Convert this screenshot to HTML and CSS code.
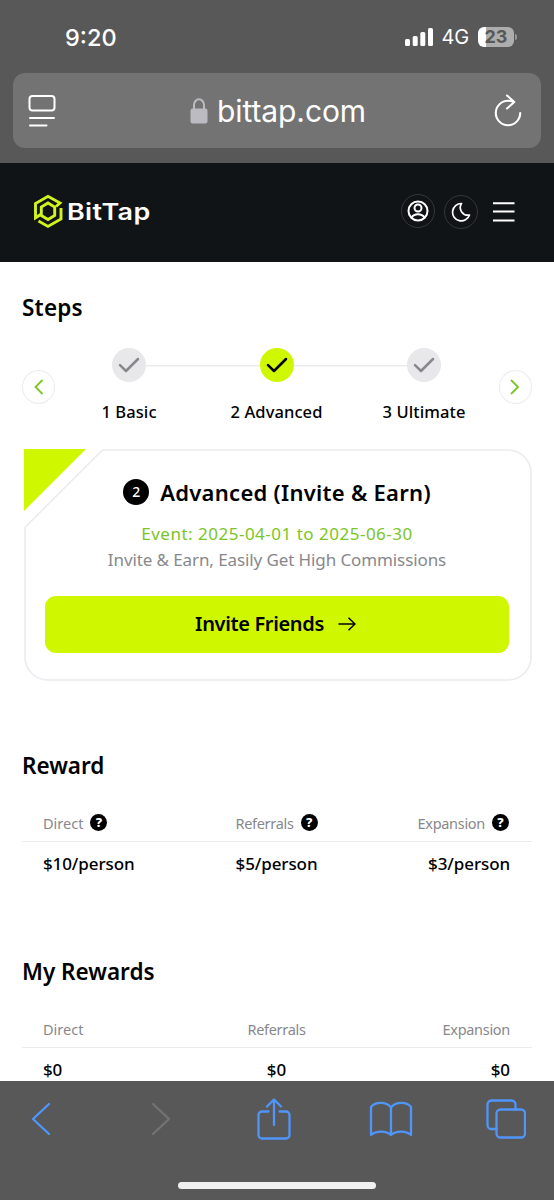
FILE: index.html
```html
<!DOCTYPE html>
<html lang="en">
<head>
<meta charset="utf-8">
<title>BitTap</title>
<link rel="stylesheet" href="styles.css">
</head>
<body>
<div class="phone">
  <div class="chrome-top">
    <div class="status">
      <span class="time">9:20</span>
      <div class="status-right">
        <svg class="signal" width="29" height="18" viewBox="0 0 29 18" fill="#fff"><rect x="0" y="11" width="5" height="7" rx="1.5"/><rect x="7.7" y="8" width="5" height="10" rx="1.5"/><rect x="15.3" y="4" width="5" height="14" rx="1.5"/><rect x="23" y="0" width="5" height="18" rx="1.5"/></svg>
        <span class="network">4G</span>
        <div class="battery"><span>23</span></div>
        <i class="battery-tip"></i>
      </div>
    </div>
    <div class="urlbar">
      <svg class="reader" width="28" height="34" viewBox="0 0 28 34" fill="none" stroke="#fff" stroke-width="2" stroke-linecap="round"><rect x="1.5" y="2" width="25" height="14.5" rx="3"/><path d="M2 24H26M2 31.6H18.5"/></svg>
      <div class="address">
        <svg width="18" height="26" viewBox="0 0 18 26"><path d="M4 12V7a5 5.7 0 0 1 10 0v5" fill="none" stroke="#bcbbc1" stroke-width="2"/><rect x="0.5" y="10.5" width="17" height="15" rx="2.2" fill="#bcbbc1"/></svg>
        <span class="domain">bittap.com</span>
      </div>
      <svg class="reload" width="28" height="34" viewBox="0 0 28 34" fill="none" stroke="#fff" stroke-width="2.1" stroke-linecap="round" stroke-linejoin="round"><path d="M19 7.600C17.500 7 16 6.800 14 6.800A12.200 12.200 0 1 0 26.200 19M13 1.500L20.300 8L13 14.500"/></svg>
    </div>
  </div>

  <header class="site-header">
    <div class="brand">
      <svg width="30" height="35" viewBox="0 0 30 35" fill="none" stroke="#d0f51c" stroke-width="2.9"><path d="M8 20.200L2.500 23.800V9.500L15 2.300L27 9L23 12.500"/><path d="M8.300 22.500V13L15 9L21.700 13V21.500L15 25.500L7.500 21"/><path d="M28 14V25L15 32.400L5.500 27"/></svg>
      <span class="wordmark">BitTap</span>
    </div>
    <div class="header-actions">
      <span class="round"><svg width="22" height="22" viewBox="0 0 22 22" fill="none" stroke="#fff" stroke-width="2"><circle cx="11" cy="11" r="9.5"/><circle cx="11" cy="8" r="3.5"/><path d="M4.6 17.5C6.3 14.8 8.5 14.3 11 14.3s4.700.5 6.400 3.200"/></svg></span>
      <span class="round moon"><svg width="20" height="20" viewBox="0 0 20 20" fill="none" stroke="#fff" stroke-width="1.7" stroke-linejoin="round"><path d="M10.500 1.500A8.700 8.700 0 1 0 18.500 13A7.600 7.600 0 0 1 10.500 1.500Z"/></svg></span>
      <svg class="menu" width="22" height="22" viewBox="0 0 22 22" stroke="#fff" stroke-width="2"><path d="M0 2.300H21.500M0 10.600H21.500M0 19.500H21.500"/></svg>
    </div>
  </header>

  <main>
    <h2 class="steps-title">Steps</h2>
    <section class="stepper">
      <button class="nav"><svg width="10" height="16" viewBox="0 0 10 16"><path d="M8.500 1L1.500 8L8.500 15"/></svg></button>
      <ol class="steps">
        <li><span class="dot"><svg width="22" height="16" viewBox="0 0 22 16"><path d="M2 8.200L8 14L20 2"/></svg></span><span>1 Basic</span></li>
        <li class="active"><span class="dot"><svg width="22" height="16" viewBox="0 0 22 16"><path d="M2 8.200L8 14L20 2"/></svg></span><span>2 Advanced</span></li>
        <li><span class="dot"><svg width="22" height="16" viewBox="0 0 22 16"><path d="M2 8.200L8 14L20 2"/></svg></span><span>3 Ultimate</span></li>
      </ol>
      <button class="nav"><svg width="10" height="16" viewBox="0 0 10 16"><path d="M1 1L8 8L1 15"/></svg></button>
    </section>

    <section class="card">
      <svg class="card-frame" width="508" height="232" viewBox="0 0 508 232"><path d="M0 0H62L0 62Z" fill="#cff700"/><path d="M78.500 1H484A23 23 0 0 1 507 24V208A23 23 0 0 1 484 231H24A23 23 0 0 1 1 208V78.500Z" fill="none" stroke="#ebebf0" stroke-width="1.600"/></svg>
      <div class="card-title"><span class="num">2</span><h3>Advanced (Invite &amp; Earn)</h3></div>
      <p class="event">Event: 2025-04-01 to 2025-06-30</p>
      <p class="desc">Invite &amp; Earn, Easily Get High Commissions</p>
      <button class="cta"><span>Invite Friends</span><svg width="18" height="14" viewBox="0 0 18 14" fill="none" stroke="#000" stroke-width="1.500"><path d="M0.500 7H17M10.500 0.800L17 7L10.500 13.200"/></svg></button>
    </section>

    <h2 class="reward-title">Reward</h2>
    <section class="table">
      <div class="row head"><span><b>Direct</b><i>?</i></span><span><b>Referrals</b><i>?</i></span><span><b>Expansion</b><i>?</i></span></div>
      <div class="row values"><span>$10/person</span><span>$5/person</span><span>$3/person</span></div>
    </section>

    <h2 class="my-title">My Rewards</h2>
    <section class="table">
      <div class="row head"><span><b>Direct</b></span><span><b>Referrals</b></span><span><b>Expansion</b></span></div>
      <div class="row values"><span>$0</span><span>$0</span><span>$0</span></div>
    </section>
  </main>

  <footer class="toolbar">
    <nav class="tools">
      <svg width="20" height="34" viewBox="0 0 20 34"><path d="M18 2L2 17L18 32"/></svg>
      <svg class="disabled" width="20" height="34" viewBox="0 0 20 34"><path d="M2 2L18 17L2 32"/></svg>
      <svg width="34" height="42" viewBox="0 0 34 42"><path d="M11.500 13.500H5A3.500 3.500 0 0 0 1.500 17V37A3.500 3.500 0 0 0 5 40.500H29A3.500 3.500 0 0 0 32.500 37V17A3.500 3.500 0 0 0 29 13.500H22.500M17 27V2M10 8.500L17 1.500L24 8.500"/></svg>
      <svg width="44" height="36" viewBox="0 0 44 36"><path d="M22 6.500C17 .5 6.500 .5 2 6V34C7 29.500 17 29.500 22 34C27 29.500 37 29.500 42 34V6C37.500 .5 27 .5 22 6.500V34"/></svg>
      <svg width="40" height="40" viewBox="0 0 40 40"><rect x="10.500" y="10.500" width="28.500" height="28" rx="4"/><path d="M10.500 30H5.500A4 4 0 0 1 1.500 26V5.500A4 4 0 0 1 5.500 1.500H25.500A4 4 0 0 1 29.500 5.500V10.500"/></svg>
    </nav>
    <div class="home"></div>
  </footer>
</div>
</body>
</html>
```

FILE: styles.css
```css
* { box-sizing: border-box; }
body { margin: 0; background: #fff; color: #000; font-family: "Noto Sans", sans-serif; }
h2, h3, p, ol { margin: 0; padding: 0; }
button { border: 0; padding: 0; font-family: inherit; color: inherit; }
svg { display: block; flex: none; }
span, b, h2, h3, p { white-space: nowrap; }

.phone { width: 554px; height: 1200px; overflow: hidden; display: flex; flex-direction: column; }

.chrome-top { height: 163px; flex: none; background: #585858; color: #fff; padding: 0 13px; font-family: Inter, sans-serif; }
.status { height: 73px; padding: 1px 24px 0 52px; display: flex; align-items: center; justify-content: space-between; }
.time { font-size: 23.500px; font-weight: 500; }
.status-right { display: flex; align-items: center; }
.network { font-size: 20px; margin: 0 9px 0 8px; letter-spacing: -0.200px; }
.battery { width: 36px; height: 20px; border-radius: 6px; background: linear-gradient(90deg, #fff 0 8px, #adadad 8px); color: #585858; font-weight: 700; font-size: 18px; line-height: 20px; text-align: center; }
.battery-tip { width: 2px; height: 6px; margin-left: 1px; background: #969696; border-radius: 0 2px 2px 0; }
.urlbar { height: 75px; background: #737373; border-radius: 12px; padding: 0 19px 0 15px; display: flex; align-items: center; justify-content: space-between; }
.address { display: flex; align-items: center; gap: 9px; margin-left: 6px; }
.domain { font-size: 30px; line-height: 36px; letter-spacing: -0.080px; }

.site-header { height: 99px; flex: none; background: #101417; padding: 0 39px 2px 33px; display: flex; align-items: center; justify-content: space-between; }
.brand { display: flex; align-items: center; gap: 4px; color: #fff; }
.wordmark { font: 600 23px/30px Inter, sans-serif; letter-spacing: 0.300px; transform: scaleX(1.170); transform-origin: 0 50%; }
.header-actions { display: flex; align-items: center; }
.round { width: 34px; height: 34px; margin-top: -1px; border: 1.500px solid #35383b; border-radius: 50%; display: grid; place-items: center; }
.round.moon { margin: 1px 15px 0 9px; }

main { height: 819px; flex: none; overflow: hidden; padding: 0 22px; }
h2 { font-size: 22.500px; font-weight: 600; line-height: 30px; }
.steps-title { margin-top: 31px; letter-spacing: 0.200px; }
.stepper { height: 80px; margin-top: 24px; display: flex; align-items: center; justify-content: space-between; }
.nav { width: 34px; height: 34px; background: #fff; border: 1.500px solid #ebebf0; border-radius: 50%; display: grid; place-items: center; }
.nav path { fill: none; stroke: #7bc525; stroke-width: 1.800; }
.steps { flex: 1; height: 80px; padding-right: 1px; display: grid; grid-template-columns: repeat(3, 147.500px); justify-content: center; list-style: none; font-size: 16.500px; font-weight: 500; letter-spacing: 0.100px; background: linear-gradient(#ebebee, #ebebee) 50% 18px / 295px 1.500px no-repeat; }
.steps li { display: flex; flex-direction: column; align-items: center; gap: 18px; line-height: 24px; padding-top: 1px; }
.dot { width: 34px; height: 34px; border-radius: 50%; background: #e8e8eb; display: grid; place-items: center; }
.dot path { fill: none; stroke: #88888c; stroke-width: 2.500; stroke-linecap: round; stroke-linejoin: round; }
.active .dot { background: #cff700; }
.active .dot path { stroke: #000; }

.card { position: relative; width: 508px; height: 232px; margin: 22px 0 0 2px; padding: 26px 23px 0 21px; display: flex; flex-direction: column; align-items: center; }
.card-frame { position: absolute; inset: 0; }
.card-title { height: 34px; display: flex; align-items: center; gap: 11px; }
.num { width: 26px; height: 26px; border-radius: 50%; background: #000; color: #fff; font-size: 14px; font-weight: 500; line-height: 26px; text-align: center; }
h3 { font-size: 22px; font-weight: 600; letter-spacing: 0.280px; }
.event, .desc { font-size: 17px; line-height: 26px; }
.event { margin-top: 12px; color: #7bc525; letter-spacing: 0.500px; }
.desc { color: #88888c; letter-spacing: -0.100px; }
.cta { width: 464px; height: 57px; margin-top: 23px; border-radius: 11px; background: #cff700; display: flex; align-items: center; justify-content: center; gap: 14px; font-size: 20px; font-weight: 600; letter-spacing: -0.350px; padding: 0 3px 2px 0; }

.reward-title { margin-top: 70px; }
.my-title { margin-top: 72px; }
.table { margin-top: 23px; width: 510px; }
.row { padding: 0 22px 0 21px; display: grid; grid-template-columns: 1fr 1fr 1fr; }
.row > span { display: flex; align-items: center; gap: 7px; }
.row > span:nth-child(2) { justify-content: center; }
.row > span:nth-child(3) { justify-content: flex-end; }
.head { height: 38px; border-bottom: 1.500px solid #ebebee; color: #88888c; font-size: 14.500px; }
.head b { font-weight: 400; }
.head span + span b { letter-spacing: -0.300px; }
.head i { width: 17px; height: 17px; border-radius: 50%; background: #000; color: #fff; font-size: 13px; font-style: normal; font-weight: 800; line-height: 17px; text-align: center; }
.head span:nth-child(3) i { margin-right: 1px; }
.values { height: 43px; font-size: 17px; font-weight: 500; letter-spacing: -0.100px; }

.toolbar { height: 119px; flex: none; background: #585858; display: flex; flex-direction: column; align-items: center; padding-top: 16px; }
.tools { width: 554px; height: 43px; padding-left: 31px; display: grid; grid-template-columns: 120px 106px 112px 117px 40px; align-items: center; }
.tools path, .tools rect { fill: none; stroke: #5095fa; stroke-width: 2.300; stroke-linecap: round; stroke-linejoin: round; }
.tools .disabled path { stroke: #737373; }
.home { width: 198px; height: 7px; margin-top: 42px; border-radius: 4px; background: #f0f0f0; }
```
